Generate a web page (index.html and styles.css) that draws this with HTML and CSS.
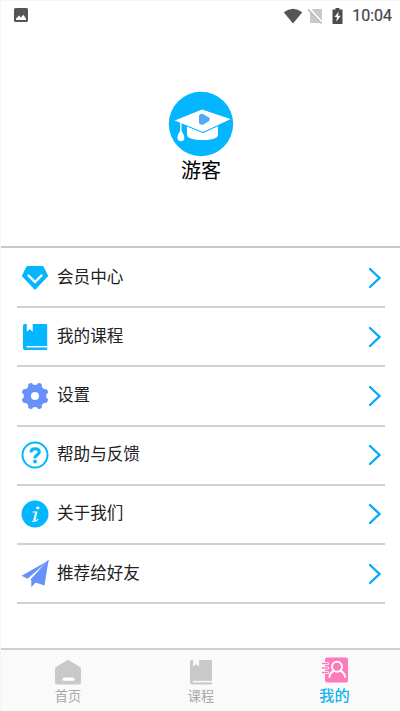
FILE: index.html
```html
<!DOCTYPE html>
<html lang="zh-CN">
<head>
<meta charset="utf-8">
<title>我的</title>
<link rel="stylesheet" href="styles.css">
</head>
<body>
<div class="app">
  <header class="status">
    <svg class="picture" width="14" height="14" viewBox="0 0 14 14"><rect width="14" height="14" rx="1.5" fill="#555"/><path d="M2 12V10.5L5 7.5L7 9.5L9.3 6.8L12 10.5V12Z" fill="#fff"/></svg>
    <svg width="20" height="16" viewBox="0 0 20 16"><path d="M.7 4.3Q10-3 19.3 4.3L10 15.5Z" fill="#555"/></svg>
    <svg class="sim" width="16" height="16" viewBox="0 0 16 16"><path d="M5 1H14V15H2V4Z" fill="#c8c8c8"/><path d="M1 1L14 15" stroke="#fff" stroke-width="3"/><path d="M0 1.5L13.5 15.5" stroke="#aaa" stroke-width="1.2"/></svg>
    <svg class="battery" width="11" height="16" viewBox="0 0 11 16"><path d="M3.5 0H7.5V1.5H10.5V16H.5V1.5H3.5Z" fill="#4c4c4c"/><path d="M6.7 3.5L2.5 9H5L4.3 13.7L8.7 7.7H6.1Z" fill="#fff"/></svg>
    <span class="time">10:04</span>
  </header>

  <section class="profile">
    <svg width="66" height="66" viewBox="0 0 66 66">
      <circle cx="33" cy="33" r="32.2" fill="#04b6ff"/>
      <path d="M19 35V44Q20 49 34.500 49Q49 49 50 44V35L35 42Z" fill="#fff"/>
      <path d="M5.500 29.500L34 18L64 28L35 41.500Z" fill="#fff" stroke="#04b6ff" stroke-width="1"/>
      <path d="M12.800 30V42" stroke="#fff" stroke-width="1.500"/>
      <path d="M12.800 39Q9 44 9.500 47.500Q10 50.200 12.800 50.200Q16 50.200 16.300 47.500Q16.500 44 12.800 39Z" fill="#fff"/>
      <path d="M31 25Q32 22 35 23L40.500 26.300Q43 28.200 40.500 30.500L35.500 33.500Q31.300 34.500 31 31.500Z" fill="#55a8f7"/>
    </svg>
    <h1>游客</h1>
  </section>

  <main class="menu">
    <a class="row">
      <svg class="icon" viewBox="0 0 28 28"><path d="M6 2.500H22L26.700 12L14 25.500L1.300 12Z" fill="#04b6ff" stroke="#04b6ff" stroke-linejoin="round"/><path d="M7.500 11.500L14 18L20.500 11.500" fill="none" stroke="#fff" stroke-width="2.400" stroke-linecap="round"/></svg>
      <span>会员中心</span>
      <svg class="arrow" viewBox="0 0 14 22"><path d="M2 2L11.500 11L2 20"/></svg>
    </a>
    <a class="row">
      <svg class="icon" viewBox="0 0 28 28"><path d="M3.500 1H25Q26.200 1 26.200 2V27H4Q2 27 2 25V2.500Q2 1 3.500 1Z" fill="#04b6ff"/><path d="M5.800 .5V8.800L8.700 6.300L11.700 8.800V.5Z" fill="#fff"/><path d="M5.500 23.700H26.500" stroke="#fff" stroke-width="1.500"/></svg>
      <span>我的课程</span>
      <svg class="arrow" viewBox="0 0 14 22"><path d="M2 2L11.500 11L2 20"/></svg>
    </a>
    <a class="row">
      <svg class="icon" viewBox="0 0 28 28"><g stroke="#6792fb" stroke-width="5.400" stroke-linecap="round"><path d="M9.800 3.800L18.200 24.200M18.200 3.800L9.800 24.200M3.800 9.800L24.200 18.200M24.200 9.800L3.800 18.200"/></g><circle cx="14" cy="14" r="11.300" fill="#6792fb"/><circle cx="14" cy="14" r="4" fill="#fff"/></svg>
      <span>设置</span>
      <svg class="arrow" viewBox="0 0 14 22"><path d="M2 2L11.500 11L2 20"/></svg>
    </a>
    <a class="row">
      <svg class="icon" viewBox="0 0 28 28"><circle cx="14" cy="14" r="12.500" fill="none" stroke="#04b6ff" stroke-width="2"/><path d="M10 11.500Q10 7.800 14 7.800Q18.300 7.800 18.300 11Q18.300 12.700 16.200 13.900Q14 15.200 14 17.300" fill="none" stroke="#04b6ff" stroke-width="3"/><circle cx="14" cy="20.500" r="1.900" fill="#04b6ff"/></svg>
      <span>帮助与反馈</span>
      <svg class="arrow" viewBox="0 0 14 22"><path d="M2 2L11.500 11L2 20"/></svg>
    </a>
    <a class="row">
      <svg class="icon" viewBox="0 0 28 28"><circle cx="14" cy="14" r="13.500" fill="#04b6ff"/><ellipse cx="16.800" cy="7.900" rx="1.700" ry="1.300" fill="#fff"/><path d="M11.500 12H14.500" stroke="#fff" stroke-width="1"/><path d="M15.500 11.500L13.200 20.700" stroke="#fff" stroke-width="2"/><path d="M11 21.200H14Q16 21 17 19" fill="none" stroke="#fff" stroke-width="1.100"/></svg>
      <span>关于我们</span>
      <svg class="arrow" viewBox="0 0 14 22"><path d="M2 2L11.500 11L2 20"/></svg>
    </a>
    <a class="row">
      <svg class="icon" viewBox="0 0 28 28"><path d="M27.500 .5L.6 15.800L6.500 18.800ZM27.500 .5L10.300 19.800V27.500L14.500 22.500L23.500 25.500Z" fill="#6792fb"/><path d="M27.500 .5L10 20" stroke="#6792fb" stroke-width="1.300"/></svg>
      <span>推荐给好友</span>
      <svg class="arrow" viewBox="0 0 14 22"><path d="M2 2L11.500 11L2 20"/></svg>
    </a>
  </main>

  <nav class="tabs">
    <a class="tab">
      <svg width="28" height="28" viewBox="0 0 28 28"><path d="M14 1.700L26 9Q27 9.700 27 11V24.500Q27 26.500 25 26.500H3Q1 26.500 1 24.500V11Q1 9.700 2 9Z" fill="#c9c9c9"/><rect x="8.500" y="19.500" width="12" height="3.200" rx="1.500" fill="#fff"/></svg>
      <span>首页</span>
    </a>
    <a class="tab">
      <svg width="28" height="28" viewBox="0 0 28 28"><path d="M4.500 2H25V26.500H5Q3 26.500 3 24.500V3.500Q3 2 4.500 2Z" fill="#c9c9c9"/><path d="M6.200 1.500V8.500L9.200 6.200L12.200 8.500V1.500Z" fill="#fafafa"/><path d="M6 23.600H25.500" stroke="#fafafa" stroke-width="1.500"/></svg>
      <span>课程</span>
    </a>
    <a class="tab active">
      <svg width="28" height="28" viewBox="0 0 28 28"><rect x="4" y="1.500" width="23" height="25" rx="2" fill="#fd7bbb"/><g fill="none" stroke="#fff" stroke-width="1.900" stroke-linecap="round"><circle cx="16" cy="10.700" r="5"/><path d="M8.300 21Q9 16.500 12.800 15M19.200 15Q23.500 16.500 24.200 21"/></g><path d="M2 7.500H6.500M2 12H6.500M2 16.500H6.500" stroke="#fff" stroke-width="3.200" stroke-linecap="round"/><path d="M1.500 7.500H6.500M1.500 12H6.500M1.500 16.500H6.500" stroke="#fd7bbb" stroke-width="1.600" stroke-linecap="round"/></svg>
      <span>我的</span>
    </a>
  </nav>
</div>
</body>
</html>
```
FILE: styles.css
```css
* { box-sizing: border-box; }
body {
  margin: 0;
  background: #fff;
  color: #222;
  font-family: "Noto Sans CJK SC", sans-serif;
}
.app {
  width: 400px;
  height: 711px;
  display: flex;
  flex-direction: column;
  overflow: hidden;
  border-left: 1px solid #f5f5f5;
}
.status {
  height: 30px;
  flex: none;
  display: flex;
  align-items: center;
  padding: 0 8px 0 13px;
  border-top: 1px solid #f6f6f6;
}
.picture { margin: 0 auto 2px 0; }
.sim { margin-left: 5px; }
.battery { margin-left: 8px; }
.time {
  margin-left: 9px;
  font: 400 16px/20px Roboto, sans-serif;
  color: #444;
  -webkit-text-stroke: .2px #444;
}
.profile {
  height: 218px;
  flex: none;
  display: flex;
  flex-direction: column;
  align-items: center;
  padding-top: 61px;
  border-bottom: 2px solid #c8c8c8;
}
.profile svg { flex: none; }
.profile h1 {
  margin: -1px 0 0 1px;
  font-size: 20px;
  font-weight: 400;
  line-height: 28px;
  color: #000;
}
.menu {
  flex: 1;
  padding: 1px 15px 0 16px;
}
.row {
  height: 59.2px;
  display: flex;
  align-items: center;
  padding: 0 3px 0 4px;
  border-bottom: 2px solid #d2d2d2;
}
.icon { width: 28px; height: 28px; }
.row span {
  margin: -4px auto 0 8px;
  font-size: 16.6px;
  line-height: 24px;
}
.arrow {
  width: 14px;
  height: 22px;
  fill: none;
  stroke: #08a9fb;
  stroke-width: 2.4;
  stroke-linecap: round;
}
.tabs {
  height: 63px;
  flex: none;
  display: grid;
  grid-template-columns: repeat(3, 1fr);
  background: #fafafa;
  border-top: 2px solid #d0d0d0;
}
.tab {
  display: flex;
  flex-direction: column;
  align-items: center;
  padding: 8px 0 0 1px;
  font-size: 13.2px;
  line-height: 20px;
  color: #a8a8a8;
}
.tab svg { flex: none; }
.active {
  padding: 6px 0 0 2px;
  font-size: 15.2px;
  font-weight: 500;
  line-height: 20px;
  color: #16b2f2;
}
```
